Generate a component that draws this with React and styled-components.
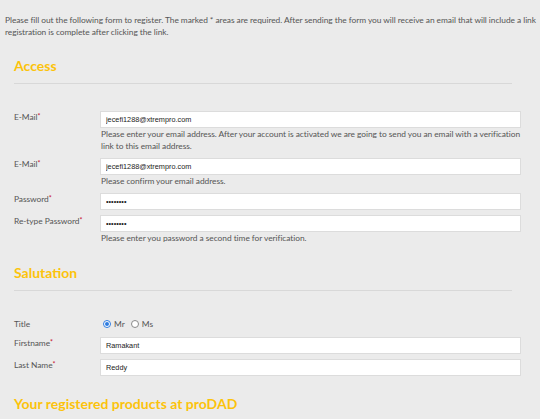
import React, { useState } from 'react';
import styled, { createGlobalStyle } from 'styled-components';

const GlobalStyle = createGlobalStyle`
  html, body {
    margin: 0;
    padding: 0;
    background: #ebebeb;
    overflow: hidden;
  }
  body {
    font-family: Lato, "Open Sans", sans-serif;
    color: #555;
  }
`;

const Page = styled.div`
  width: 540px;
  height: 419px;
  overflow: hidden;
`;

const Intro = styled.p`
  margin: 0;
  padding: 14px 0 0 5px;
  font-size: 8.4px;
  letter-spacing: -0.05px;
  line-height: 12px;
  color: #555;
`;

const IntroLine = styled.span`
  display: block;
  white-space: nowrap;
`;

const Section = styled.section`
  width: 498px;
  padding-left: 14px;
`;

const Heading = styled.h2`
  margin: ${p => p.$top}px 0 0;
  font-size: 14px;
  line-height: 20px;
  font-weight: 700;
  color: #fcc30b;
`;

const Rule = styled.hr`
  margin: 7px 0 0;
  border: none;
  border-top: 1px solid #d8d8d8;
  height: 0;
`;

const Fields = styled.div`
  padding-top: ${p => p.$top}px;
  display: flex;
  flex-direction: column;
`;

const Row = styled.div`
  display: grid;
  grid-template-columns: 86px 421px;
  margin-bottom: ${p => p.$gap ?? 5}px;
`;

const Label = styled.label`
  font-size: 8.4px;
  letter-spacing: -0.05px;
  line-height: 12px;
  color: #555;
`;

const Req = styled.span`
  color: #c8102e;
  font-size: 7px;
  vertical-align: top;
  line-height: 10px;
`;

const Control = styled.div`
  display: flex;
  flex-direction: column;
`;

const Input = styled.input`
  box-sizing: border-box;
  width: 421px;
  height: 17px;
  margin: 0;
  padding: 0 5px;
  border: 1px solid #dcdcdc;
  background: #fff;
  font-family: "Liberation Sans", Arial, sans-serif;
  font-size: 7.3px;
  color: #222;
  outline: none;
`;

const Help = styled.div`
  font-size: 8.4px;
  letter-spacing: -0.05px;
  line-height: 12px;
  color: #555;
  padding-left: 1px;
  white-space: nowrap;
`;

const Radios = styled.div`
  display: flex;
  align-items: center;
  gap: 4px;
  height: 12px;
  padding-left: 3px;
  font-size: 8.4px;
`;

const RadioOption = styled.label`
  display: flex;
  align-items: center;
  gap: 3px;
  margin-right: 2px;
`;

const RadioDot = styled.span`
  box-sizing: border-box;
  width: 8px;
  height: 8px;
  border-radius: 50%;
  border: 1px solid ${p => (p.$on ? '#2f7ce0' : '#8a8a8a')};
  background: #fff;
  display: flex;
  align-items: center;
  justify-content: center;

  &::after {
    content: '';
    width: 4px;
    height: 4px;
    border-radius: 50%;
    background: ${p => (p.$on ? '#2f7ce0' : 'transparent')};
  }
`;

const Field = ({ label, required, value, type = 'text', help, gap }) => (
  <Row $gap={gap}>
    <Label>
      {label}
      {required && <Req>*</Req>}
    </Label>
    <Control>
      <Input type={type} defaultValue={value} />
      {help && help.map(line => <Help key={line}>{line}</Help>)}
    </Control>
  </Row>
);

const App = () => {
  const [title, setTitle] = useState('Mr');

  return (
    <Page>
      <GlobalStyle />
      <Intro>
        <IntroLine>
          Please fill out the following form to register. The marked * areas are required. After sending the form you will receive an email that will include a link
        </IntroLine>
        <IntroLine>registration is complete after clicking the link.</IntroLine>
      </Intro>

      <Section>
        <Heading $top={18}>Access</Heading>
        <Rule />
        <Fields $top={27}>
          <Field
            label="E-Mail"
            required
            value="jecefi1288@xtrempro.com"
            gap={6}
            help={[
              'Please enter your email address. After your account is activated we are going to send you an email with a verification',
              'link to this email address.',
            ]}
          />
          <Field
            label="E-Mail"
            required
            value="jecefi1288@xtrempro.com"
            gap={6}
            help={['Please confirm your email address.']}
          />
          <Field label="Password" required type="password" value="12345678" />
          <Field
            label="Re-type Password"
            required
            type="password"
            value="12345678"
            gap={0}
            help={['Please enter you password a second time for verification.']}
          />
        </Fields>
      </Section>

      <Section>
        <Heading $top={19}>Salutation</Heading>
        <Rule />
        <Fields $top={27}>
          <Row $gap={7}>
            <Label>Title</Label>
            <Radios>
              {['Mr', 'Ms'].map(t => (
                <RadioOption key={t} onClick={() => setTitle(t)}>
                  <RadioDot $on={title === t} />
                  {t}
                </RadioOption>
              ))}
            </Radios>
          </Row>
          <Field label="Firstname" required value="Ramakant" />
          <Field label="Last Name" required value="Reddy" gap={0} />
        </Fields>
      </Section>

      <Section>
        <Heading $top={18}>Your registered products at proDAD</Heading>
      </Section>
    </Page>
  );
};

export default App;
